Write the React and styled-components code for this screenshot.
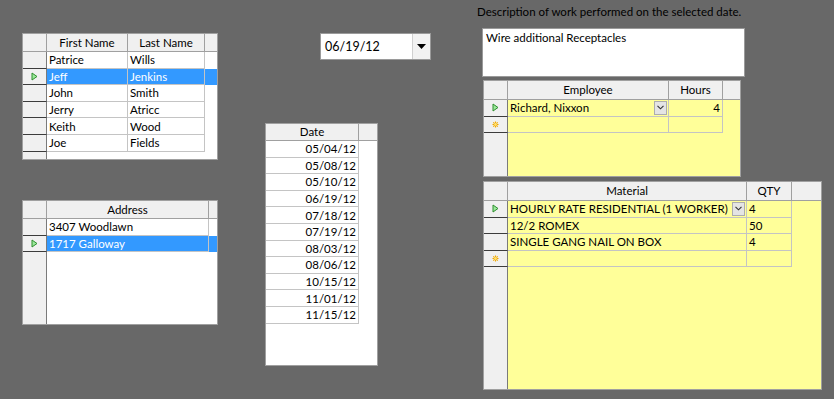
import React from "react";
import styled, { createGlobalStyle } from "styled-components";

const GlobalStyle = createGlobalStyle`
  html, body {
    margin: 0;
    padding: 0;
    background: #686868;
  }
  body {
    font-family: Lato, "Noto Sans", sans-serif;
    font-size: 11.5px;
    color: #000;
  }
`;

const Page = styled.div`
  width: 834px;
  height: 399px;
  box-sizing: border-box;
  padding-left: 22px;
  display: flex;
  align-items: flex-start;
  background: #686868;
  overflow: hidden;
`;

const LeftColumn = styled.div`
  display: flex;
  flex-direction: column;
  gap: 40px;
  margin-top: 33px;
`;

const DateColumn = styled.div`
  width: 166px;
  margin-left: 47px;
  margin-top: 33px;
  display: flex;
  flex-direction: column;
  gap: 63px;
`;

const RightColumn = styled.div`
  margin-left: 46px;
  display: flex;
  flex-direction: column;
`;

const Label = styled.div`
  color: #000;
  line-height: 18px;
  margin-top: 3px;
  white-space: nowrap;
`;

const Memo = styled.div`
  width: 263px;
  height: 49px;
  box-sizing: border-box;
  margin: 7px 0 0 5px;
  padding: 2px 3px;
  background: #fff;
  border: 1px solid #9a9a9a;
`;

const Picker = styled.div`
  width: 111px;
  height: 27px;
  margin-left: 55px;
  box-sizing: border-box;
  display: flex;
  background: #fff;
  border: 1px solid #9a9a9a;
`;

const PickerText = styled.div`
  flex: 1;
  padding-left: 4px;
  font-size: 12.5px;
  line-height: 25px;
`;

const PickerButton = styled.div`
  width: 17px;
  display: flex;
  align-items: center;
  justify-content: center;
  background: #f2f2f2;
  border-left: 1px solid #d0d0d0;
`;

const Grid = styled.div`
  width: ${(p) => p.$w}px;
  height: ${(p) => p.$h}px;
  margin-left: ${(p) => p.$ml || 0}px;
  margin-top: ${(p) => p.$mt || 0}px;
  box-sizing: border-box;
  border: 1px solid #a0a0a0;
  background: ${(p) => p.$bg};
  display: flex;
  flex-direction: column;
  overflow: hidden;
`;

const HeaderRow = styled.div`
  display: flex;
  height: ${(p) => p.$h}px;
  flex-shrink: 0;
`;

const HeaderCell = styled.div`
  width: ${(p) => p.$w}px;
  flex: ${(p) => (p.$fill ? 1 : "none")};
  box-sizing: border-box;
  background: #f0f0f0;
  border-right: ${(p) => (p.$fill ? "none" : "1px solid #a0a0a0")};
  border-bottom: 1px solid #a0a0a0;
  text-align: center;
  line-height: ${(p) => p.$h - 1}px;
  white-space: nowrap;
`;

const Row = styled.div`
  display: flex;
  height: 16.6px;
  flex-shrink: 0;
`;

const RowHead = styled.div`
  width: 24px;
  flex-shrink: 0;
  box-sizing: border-box;
  background: #f0f0f0;
  border-right: 1px solid #7a7a7a;
  border-bottom: ${(p) => (p.$last ? "none" : "1px solid #3c3c3c")};
  display: flex;
  align-items: center;
  justify-content: center;
`;

const Cell = styled.div`
  width: ${(p) => p.$w}px;
  flex-shrink: 0;
  box-sizing: border-box;
  padding: 0 2px;
  border-right: 1px solid ${(p) => p.$line};
  border-bottom: 1px solid ${(p) => p.$line};
  background: ${(p) => (p.$sel ? "#3399ff" : "transparent")};
  color: ${(p) => (p.$sel ? "#fff" : "#000")};
  display: flex;
  align-items: center;
  justify-content: ${(p) => (p.$align === "right" ? "flex-end" : "space-between")};
  white-space: nowrap;
  overflow: hidden;
  line-height: 15px;
`;

const RowFill = styled.div`
  flex: 1;
  background: ${(p) => (p.$sel ? "#3399ff" : "transparent")};
`;

const EmptyArea = styled.div`
  flex: 1;
  display: flex;
`;

const ComboButton = styled.div`
  width: 13px;
  height: 14px;
  flex-shrink: 0;
  margin-right: -1px;
  box-sizing: border-box;
  background: #e4e4e4;
  border: 1px solid #adadad;
  display: flex;
  align-items: center;
  justify-content: center;
`;

const CurrentArrow = () => (
  <svg width="7" height="9" viewBox="0 0 7 9">
    <path d="M1 1 L6 4.5 L1 8 Z" fill="#9be89b" stroke="#2f8f2f" strokeWidth="1" />
  </svg>
);

const NewRowMark = () => (
  <svg width="7" height="7" viewBox="0 0 7 7">
    <path d="M3.5 0.5 V6.5 M0.5 3.5 H6.5 M1.3 1.3 L5.7 5.7 M5.7 1.3 L1.3 5.7" stroke="#f0a800" strokeWidth="1.1" />
    <circle cx="3.5" cy="3.5" r="1.4" fill="#ffe070" />
  </svg>
);

const Chevron = () => (
  <svg width="7" height="5" viewBox="0 0 7 5">
    <path d="M0.5 0.8 L3.5 3.8 L6.5 0.8" fill="none" stroke="#333" strokeWidth="1.1" />
  </svg>
);

const DownTriangle = () => (
  <svg width="9" height="5" viewBox="0 0 9 5">
    <path d="M0 0 H9 L4.5 5 Z" fill="#000" />
  </svg>
);

const DataGrid = ({
  w,
  h,
  ml,
  mt,
  bg = "#fff",
  line = "#c4c4c4",
  headH = 18,
  rowHeaders = true,
  columns,
  rows,
  selected = -1,
  current = -1,
  newRow = false,
}) => (
  <Grid $w={w} $h={h} $ml={ml} $mt={mt} $bg={bg}>
    <HeaderRow $h={headH}>
      {rowHeaders && <HeaderCell $w={24} $h={headH} />}
      {columns.map((c) => (
        <HeaderCell key={c.title} $w={c.width} $h={headH}>
          {c.title}
        </HeaderCell>
      ))}
      <HeaderCell $fill $h={headH} />
    </HeaderRow>
    {rows.map((r, i) => (
      <Row key={i}>
        {rowHeaders && <RowHead>{i === current && <CurrentArrow />}</RowHead>}
        {columns.map((c, j) => (
          <Cell key={j} $w={c.width} $align={c.align} $line={line} $sel={i === selected}>
            <span>{r.cells[j]}</span>
            {r.combo === j && (
              <ComboButton>
                <Chevron />
              </ComboButton>
            )}
          </Cell>
        ))}
        <RowFill $sel={i === selected} />
      </Row>
    ))}
    {newRow && (
      <Row>
        <RowHead>
          <NewRowMark />
        </RowHead>
        {columns.map((c, j) => (
          <Cell key={j} $w={c.width} $line={line} />
        ))}
        <RowFill />
      </Row>
    )}
    <EmptyArea>{rowHeaders && <RowHead $last />}</EmptyArea>
  </Grid>
);

const people = [
  ["Patrice", "Wills"],
  ["Jeff", "Jenkins"],
  ["John", "Smith"],
  ["Jerry", "Atricc"],
  ["Keith", "Wood"],
  ["Joe", "Fields"],
].map((cells) => ({ cells }));

const addresses = [["3407 Woodlawn"], ["1717 Galloway"]].map((cells) => ({ cells }));

const dates = [
  "05/04/12",
  "05/08/12",
  "05/10/12",
  "06/19/12",
  "07/18/12",
  "07/19/12",
  "08/03/12",
  "08/06/12",
  "10/15/12",
  "11/01/12",
  "11/15/12",
].map((d) => ({ cells: [d] }));

const labor = [{ cells: ["Richard, Nixxon", "4"], combo: 0 }];

const materials = [
  { cells: ["HOURLY RATE RESIDENTIAL (1 WORKER)", "4"], combo: 0 },
  { cells: ["12/2 ROMEX", "50"] },
  { cells: ["SINGLE GANG NAIL ON BOX", "4"] },
];

const App = () => {
  return (
    <Page>
      <GlobalStyle />
      <LeftColumn>
        <DataGrid
          w={196}
          h={127}
          columns={[
            { title: "First Name", width: 81 },
            { title: "Last Name", width: 77 },
          ]}
          rows={people}
          selected={1}
          current={1}
        />
        <DataGrid
          w={196}
          h={125}
          columns={[{ title: "Address", width: 162 }]}
          rows={addresses}
          selected={1}
          current={1}
        />
      </LeftColumn>
      <DateColumn>
        <Picker>
          <PickerText>06/19/12</PickerText>
          <PickerButton>
            <DownTriangle />
          </PickerButton>
        </Picker>
        <DataGrid
          w={113}
          h={243}
          headH={17}
          rowHeaders={false}
          columns={[{ title: "Date", width: 93, align: "right" }]}
          rows={dates}
        />
      </DateColumn>
      <RightColumn>
        <Label>Description of work performed on the selected date.</Label>
        <Memo>Wire additional Receptacles</Memo>
        <DataGrid
          w={258}
          h={97}
          ml={6}
          mt={3}
          bg="#ffff99"
          headH={19}
          columns={[
            { title: "Employee", width: 161 },
            { title: "Hours", width: 54, align: "right" },
          ]}
          rows={labor}
          current={0}
          newRow
        />
        <DataGrid
          w={339}
          h={209}
          ml={6}
          mt={4}
          bg="#ffff99"
          headH={19}
          columns={[
            { title: "Material", width: 239 },
            { title: "QTY", width: 45 },
          ]}
          rows={materials}
          current={0}
          newRow
        />
      </RightColumn>
    </Page>
  );
};

export default App;
